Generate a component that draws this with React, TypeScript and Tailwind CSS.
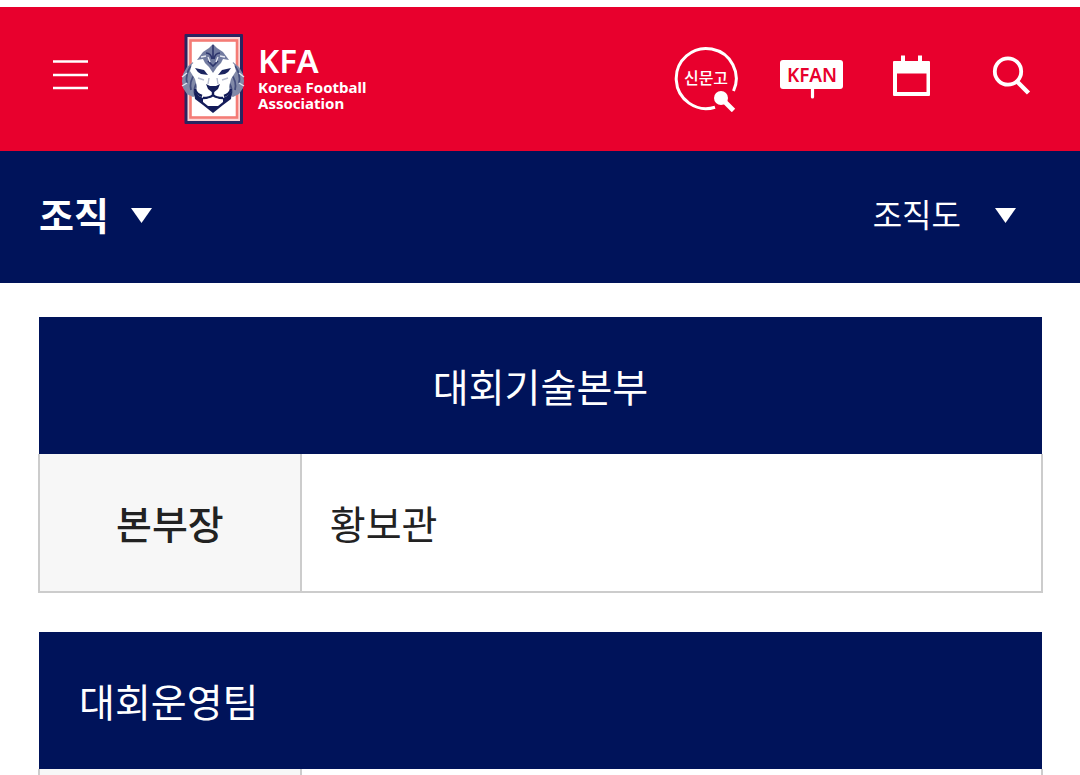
import type { ReactNode } from "react";

interface Member {
  role: string;
  name: string;
}

interface Department {
  title: string;
  align: "center" | "left";
  members: Member[];
}

const departments: Department[] = [
  {
    title: "대회기술본부",
    align: "center",
    members: [{ role: "본부장", name: "황보관" }],
  },
  {
    title: "대회운영팀",
    align: "left",
    members: [{ role: "", name: "" }],
  },
];

function LionCrest() {
  return (
    <svg width="70" height="100" viewBox="0 0 70 100" fill="none" aria-hidden="true">
      {/* Frame */}
      <rect x="4.5" y="5" width="58.5" height="90" rx="1" fill="#2a2560" />
      <rect x="7.5" y="8" width="52.5" height="84" fill="#fbd5d5" />
      <rect x="10.5" y="11.5" width="46.5" height="77" fill="#fff" stroke="#f47c76" strokeWidth="2.6" />

      {/* Mane on both sides */}
      <path d="M13 33 L7 38 L3 45 L2 52 L3 59 L7 65 L13 68 L18 66 L19 52 L15 42 Z" fill="#8189a8" />
      <path d="M53 33 L59 38 L63 45 L64 52 L63 59 L59 65 L53 68 L48 66 L47 52 L51 42 Z" fill="#8189a8" />
      <path d="M11 37 Q5 45 7 54 M15 45 Q9 52 11 61 M17 54 Q13 59 15 66" stroke="#444d7c" strokeWidth="1.8" />
      <path d="M55 37 Q61 45 59 54 M51 45 Q57 52 55 61 M49 54 Q53 59 51 66" stroke="#444d7c" strokeWidth="1.8" />
      <path d="M2 48 L7 44 M2 57 L7 54 M64 48 L59 44 M64 57 L59 54" stroke="#dfe3ee" strokeWidth="1.4" />

      {/* Face */}
      <path d="M33 20 L44 29 L54 35 L56 42 L51 50 L49 58 L51 66 L45 75 L33 83 L21 75 L15 66 L17 58 L15 50 L10 42 L12 35 L22 29 Z" fill="#fff" />

      {/* Forehead stripes */}
      <path d="M33 15 L37 19 L43 23 L49 31 L43 30 L41 34 L37 38 L33 44 L29 38 L25 34 L23 30 L17 31 L23 23 L29 19 Z" fill="#727ba0" />
      <path d="M33 16 V30 M26 24 Q31 24 32 30 M40 24 Q35 24 34 30 M28 32 L33 37 L38 32" stroke="#2d356c" strokeWidth="1.6" />
      <path d="M21 28 L26 27 M45 28 L40 27 M28 28 L30 33 M38 28 L36 33" stroke="#e6e9f2" strokeWidth="1.3" />

      {/* Brows and eyes */}
      <path d="M15 39 L24 41 L28 46 L21 45 Q17 43 15 39 Z" fill="#1b2460" />
      <path d="M51 39 L42 41 L38 46 L45 45 Q49 43 51 39 Z" fill="#1b2460" />
      <path d="M18 49 L24 51 M48 49 L42 51 M29 49 L28 55 M37 49 L38 55" stroke="#b8bdd0" strokeWidth="1.4" />

      {/* Nose and muzzle */}
      <path d="M26 55 L30 57 H36 L40 55 L38 60 L33 64 L28 60 Z" fill="#141c59" />
      <path d="M33 62 V67 M15 60 Q16 65 22 67 M51 60 Q50 65 44 67 M23 69 Q30 69 33 66 Q36 69 43 69" stroke="#141c59" strokeWidth="2.4" />
      <path d="M14 62 L19 67 L23 69 L23 73 L28 77 H38 L43 73 L43 69 L47 67 L52 62 L51 70 L43 76 L33 84 L23 76 L15 70 Z" fill="#141c59" />
      <path d="M25 71 Q33 67 41 71 L37 75 H29 Z" fill="#fff" />
    </svg>
  );
}

function Logo() {
  return (
    <a href="#" className="flex h-[100px] items-center gap-2 font-['Noto_Sans','Open_Sans',sans-serif] text-white">
      <LionCrest />
      <span className="flex flex-col pb-1">
        <span className="text-[33px] leading-9 font-semibold">KFA</span>
        <span className="text-[15px] leading-4 font-bold">
          Korea Football
          <br />
          Association
        </span>
      </span>
    </a>
  );
}

function IconLink({ label, children }: { label: string; children: ReactNode }) {
  return (
    <a href="#" aria-label={label} className="block">
      <svg width="68" height="66" viewBox="0 0 68 66" fill="none">
        {children}
      </svg>
    </a>
  );
}

function Header() {
  return (
    <header className="mt-[7px] flex h-36 items-center bg-[#e8002d] pr-8 pl-[53px]">
      <button type="button" aria-label="메뉴" className="block cursor-pointer">
        <svg width="35" height="66" viewBox="0 0 35 66" fill="none" stroke="#fff" strokeWidth="2.4">
          <path d="M0 15.5 H35 M0 29 H35 M0 42 H35" />
        </svg>
      </button>
      <div className="ml-[92px]">
        <Logo />
      </div>

      <nav className="ml-auto flex items-center gap-[34px]">
        <IconLink label="신문고">
          <path d="M59.5 45 A30 30 0 1 0 41 61.2" stroke="#fff" strokeWidth="3" />
          <text
            x="32"
            y="38"
            textAnchor="middle"
            fill="#fff"
            className="font-['Noto_Sans_CJK_KR',sans-serif] text-[16px] font-medium"
          >
            신문고
          </text>
          <circle cx="47" cy="52" r="7" fill="#fff" />
          <path d="M50 55 L59.5 64.5" stroke="#fff" strokeWidth="4.8" />
        </IconLink>
        <IconLink label="KFAN">
          <rect x="4" y="14" width="63" height="29" rx="3" fill="#fff" />
          <path d="M36.5 42 V51" stroke="#fff" strokeWidth="3.2" strokeLinecap="round" />
          <text
            x="36"
            y="36"
            textAnchor="middle"
            fill="#e8002d"
            className="font-['Noto_Sans',sans-serif] text-[19px] font-semibold"
          >
            KFAN
          </text>
        </IconLink>
        <IconLink label="일정">
          <path d="M25 9.5 V18 M42 9.5 V18" stroke="#fff" strokeWidth="4" />
          <path d="M16 15 H51 Q52 15 52 16 V49 Q52 50 51 50 H16 Q15 50 15 49 V16 Q15 15 16 15 Z M19 27.5 V46 H48.5 V27.5 Z" fill="#fff" fillRule="evenodd" />
        </IconLink>
        <IconLink label="검색">
          <circle cx="28" cy="25.5" r="13.2" stroke="#fff" strokeWidth="3.8" />
          <path d="M37 35.5 L48.5 47" stroke="#fff" strokeWidth="4.4" />
        </IconLink>
      </nav>
    </header>
  );
}

function DownArrow() {
  return (
    <svg width="21" height="15" viewBox="0 0 21 15" fill="#fff" aria-hidden="true">
      <path d="M0 0 H21 L10.5 15 Z" />
    </svg>
  );
}

function SubNav() {
  return (
    <nav className="flex h-[132px] items-center justify-between bg-[#00135a] pr-16 pb-1 pl-[39px] text-white">
      <button type="button" aria-haspopup="menu" className="flex cursor-pointer items-center gap-[22px] text-[38px] font-bold">
        <span className="pb-1">조직</span>
        <DownArrow />
      </button>
      <button type="button" aria-haspopup="menu" className="flex cursor-pointer items-center gap-[34px] text-[32px]">
        <span className="pb-1">조직도</span>
        <DownArrow />
      </button>
    </nav>
  );
}

function DepartmentTable({ title, align, members }: Department) {
  return (
    <table className="w-full table-fixed border-collapse text-[39px] leading-[57px] text-[#222]">
      <colgroup>
        <col className="w-[26.1%]" />
        <col />
      </colgroup>
      <thead>
        <tr className="h-[137px]">
          <th
            colSpan={2}
            scope="colgroup"
            className={`bg-[#00135a] px-10 font-normal text-white ${align === "center" ? "text-center" : "text-left"}`}
          >
            {title}
          </th>
        </tr>
      </thead>
      <tbody>
        {members.map((member, i) => (
          <tr key={i} className="h-[138px]">
            <th scope="row" className="border-2 border-t-0 border-[#ccc] bg-[#f7f7f7] font-medium">
              {member.role}
            </th>
            <td className="border-2 border-t-0 border-[#ccc] px-7">{member.name}</td>
          </tr>
        ))}
      </tbody>
    </table>
  );
}

export default function App() {
  return (
    <div className="h-screen overflow-hidden bg-white font-['Noto_Sans_CJK_KR',sans-serif]">
      <Header />
      <SubNav />
      <main className="flex flex-col gap-[39px] pt-[34px] pr-[37px] pl-[38px]">
        {departments.map((department) => (
          <DepartmentTable key={department.title} {...department} />
        ))}
      </main>
    </div>
  );
}
